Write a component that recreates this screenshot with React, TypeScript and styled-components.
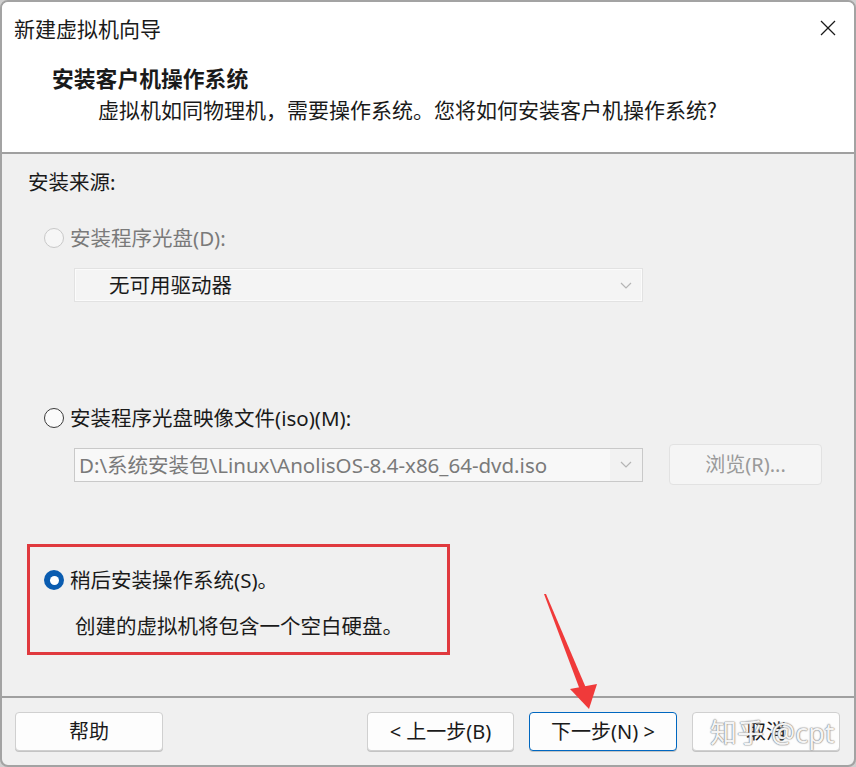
import React from "react";
import styled, { createGlobalStyle } from "styled-components";

const Global = createGlobalStyle`
  html, body { margin: 0; padding: 0; background: #cfcfcf; }
  body { font-family: "Noto Sans", "Noto Sans CJK SC", sans-serif; }
  * { box-sizing: border-box; }
`;

const CJK = `"Noto Sans CJK SC", "Noto Sans", sans-serif`;
const MIX = `"Noto Sans", "Noto Sans CJK SC", sans-serif`;

const Window = styled.div`
  position: relative;
  width: 856px;
  height: 767px;
  border: 2px solid #a3a3a3;
  border-radius: 8px;
  overflow: hidden;
  display: flex;
  flex-direction: column;
  background: #f0f0f0;
  color: #1a1a1a;
`;

const Header = styled.div`
  height: 152px;
  background: #ffffff;
  border-bottom: 2px solid #a0a0a0;
  display: flex;
  flex-direction: column;
`;

const TitleBar = styled.div`
  height: 52px;
  display: flex;
  align-items: center;
  justify-content: space-between;
  padding: 0 14px 0 12px;
`;

const Title = styled.div`
  font-family: ${CJK};
  font-size: 21px;
  line-height: 28px;
`;

const CloseBtn = styled.div`
  width: 24px;
  height: 24px;
  display: flex;
  align-items: center;
  justify-content: center;
`;

const Intro = styled.div`
  padding: 10px 0 0 50px;
  display: flex;
  flex-direction: column;
  gap: 3px;
`;

const Heading = styled.div`
  font-family: ${CJK};
  font-weight: 700;
  font-size: 21.8px;
  line-height: 28px;
`;

const Subtitle = styled.div`
  font-family: ${CJK};
  font-size: 21px;
  line-height: 28px;
  padding-left: 46px;
`;

const Body = styled.div`
  flex: 1;
  padding: 14px 0 0 26px;
  display: flex;
  flex-direction: column;
`;

const Label = styled.div`
  font-family: ${MIX};
  font-size: 20.5px;
  line-height: 28px;
`;

const RadioRow = styled.div<{ $top: number; $indent?: number }>`
  display: flex;
  align-items: center;
  gap: 6px;
  margin-top: ${(p) => p.$top}px;
  padding-left: ${(p) => p.$indent ?? 16}px;
  height: 28px;
`;

const RadioCircle = styled.div<{ $state: "disabled" | "off" | "on" }>`
  width: 20px;
  height: 20px;
  border-radius: 50%;
  flex: none;
  display: flex;
  align-items: center;
  justify-content: center;
  border: ${(p) =>
    p.$state === "disabled"
      ? "1px solid #c8c8c8"
      : p.$state === "off"
      ? "1px solid #3a3a3a"
      : "none"};
  background: ${(p) =>
    p.$state === "disabled" ? "#f6f6f6" : p.$state === "off" ? "#fbfbfb" : "#0a5cb0"};
  &::after {
    content: "";
    display: ${(p) => (p.$state === "on" ? "block" : "none")};
    width: 9px;
    height: 9px;
    border-radius: 50%;
    background: #ffffff;
  }
`;

const RadioText = styled.span<{ $disabled?: boolean }>`
  font-family: ${MIX};
  font-size: 20.5px;
  line-height: 28px;
  color: ${(p) => (p.$disabled ? "#7a7a7a" : "#1a1a1a")};
  white-space: nowrap;
`;

const ComboRow = styled.div<{ $top: number }>`
  display: flex;
  align-items: center;
  margin-top: ${(p) => p.$top}px;
  padding-left: 46px;
  gap: 26px;
`;

const Combo = styled.div<{ $variant: "empty" | "path" }>`
  width: 569px;
  height: 34px;
  display: flex;
  align-items: stretch;
  border: 1px solid ${(p) => (p.$variant === "empty" ? "#e2e2e2" : "#c9c9c9")};
  background: ${(p) => (p.$variant === "empty" ? "#f4f4f4" : "#f2f2f2")};
  box-shadow: ${(p) => (p.$variant === "empty" ? "inset 0 0 0 1px #fbfbfb" : "none")};
`;

const ComboText = styled.div<{ $variant: "empty" | "path" }>`
  flex: 1;
  display: flex;
  align-items: center;
  padding-left: ${(p) => (p.$variant === "empty" ? "34px" : "4px")};
  font-family: ${MIX};
  font-size: 20.5px;
  line-height: 28px;
  white-space: nowrap;
  overflow: hidden;
  color: ${(p) => (p.$variant === "empty" ? "#1a1a1a" : "#7a7a7a")};
  background: ${(p) => (p.$variant === "empty" ? "transparent" : "#f8f8f8")};
`;

const ComboArrow = styled.div`
  width: 32px;
  display: flex;
  align-items: center;
  justify-content: center;
`;

const Button = styled.div<{ $variant?: "normal" | "default" | "disabled"; $w?: number }>`
  width: ${(p) => p.$w ?? 148}px;
  height: 39px;
  border-radius: 4px;
  display: flex;
  align-items: center;
  justify-content: center;
  font-family: ${MIX};
  font-size: 20px;
  line-height: 28px;
  white-space: nowrap;
  background: ${(p) => (p.$variant === "disabled" ? "#f5f5f5" : "#fdfdfd")};
  color: ${(p) => (p.$variant === "disabled" ? "#9a9a9a" : "#1a1a1a")};
  border: 1px solid
    ${(p) =>
      p.$variant === "default" ? "#0067c0" : p.$variant === "disabled" ? "#e2e2e2" : "#d0d0d0"};
  box-shadow: ${(p) => (p.$variant === "disabled" ? "none" : "0 1px 0 #c4c4c4")};
`;

const BrowseButton = styled(Button)`
  height: 41px;
`;

const Highlight = styled.div`
  margin: 59px 0 0 -1px;
  width: 423px;
  height: 111px;
  border: 3px solid #e0393e;
  padding: 19px 0 0 14px;
  display: flex;
  flex-direction: column;
`;

const Description = styled.div`
  margin: 17px 0 0 31px;
  font-family: ${CJK};
  font-size: 20.5px;
  line-height: 28px;
`;

const Footer = styled.div`
  height: 69px;
  border-top: 2px solid #a0a0a0;
  padding: 14px 14px 0 13px;
  display: flex;
  align-items: flex-start;
`;

const FooterRight = styled.div`
  margin-left: auto;
  display: flex;
  gap: 15px;
`;

const Overlay = styled.svg`
  position: absolute;
  left: -2px;
  top: -2px;
  width: 856px;
  height: 767px;
  pointer-events: none;
`;

const Watermark = styled.div`
  position: absolute;
  left: 708px;
  top: 713px;
  font-family: ${MIX};
  font-size: 27px;
  line-height: 36px;
  color: rgba(255, 255, 255, 0.92);
  text-shadow: 0 0 1px #8a8a8a, 0 0 1px #8a8a8a, 0 0 2px #9a9a9a;
  pointer-events: none;
  white-space: nowrap;
`;

const Chevron = () => (
  <svg width="12" height="7" viewBox="0 0 12 7">
    <polyline points="1,1 6,6 11,1" fill="none" stroke="#b4b4b4" strokeWidth="1.2" />
  </svg>
);

export default function App() {
  return (
    <>
      <Global />
      <Window>
        <Header>
          <TitleBar>
            <Title>新建虚拟机向导</Title>
            <CloseBtn>
              <svg width="18" height="18" viewBox="0 0 18 18">
                <line x1="2" y1="2" x2="16" y2="16" stroke="#1a1a1a" strokeWidth="1.3" />
                <line x1="16" y1="2" x2="2" y2="16" stroke="#1a1a1a" strokeWidth="1.3" />
              </svg>
            </CloseBtn>
          </TitleBar>
          <Intro>
            <Heading>安装客户机操作系统</Heading>
            <Subtitle>虚拟机如同物理机，需要操作系统。您将如何安装客户机操作系统?</Subtitle>
          </Intro>
        </Header>
        <Body>
          <Label>安装来源:</Label>
          <RadioRow $top={28}>
            <RadioCircle $state="disabled" />
            <RadioText $disabled>安装程序光盘(D):</RadioText>
          </RadioRow>
          <ComboRow $top={16}>
            <Combo $variant="empty">
              <ComboText $variant="empty">无可用驱动器</ComboText>
              <ComboArrow>
                <Chevron />
              </ComboArrow>
            </Combo>
          </ComboRow>
          <RadioRow $top={102}>
            <RadioCircle $state="off" />
            <RadioText>安装程序光盘映像文件(iso)(M):</RadioText>
          </RadioRow>
          <ComboRow $top={12}>
            <Combo $variant="path">
              <ComboText $variant="path">D:\系统安装包\Linux\AnolisOS-8.4-x86_64-dvd.iso</ComboText>
              <ComboArrow>
                <Chevron />
              </ComboArrow>
            </Combo>
            <BrowseButton $variant="disabled" $w={153}>
              浏览(R)...
            </BrowseButton>
          </ComboRow>
          <Highlight>
            <RadioRow $top={0} $indent={0}>
              <RadioCircle $state="on" />
              <RadioText>稍后安装操作系统(S)。</RadioText>
            </RadioRow>
            <Description>创建的虚拟机将包含一个空白硬盘。</Description>
          </Highlight>
        </Body>
        <Footer>
          <Button>帮助</Button>
          <FooterRight>
            <Button $w={147}>&lt; 上一步(B)</Button>
            <Button $variant="default">下一步(N) &gt;</Button>
            <Button>取消</Button>
          </FooterRight>
        </Footer>
        <Overlay viewBox="0 0 856 767">
          <polygon points="544,594 546,594 586,688 580,690" fill="#f03a3a" />
          <polygon points="570,689 597,684 589,709" fill="#f03a3a" />
        </Overlay>
        <Watermark>知乎 @cpt</Watermark>
      </Window>
    </>
  );
}
